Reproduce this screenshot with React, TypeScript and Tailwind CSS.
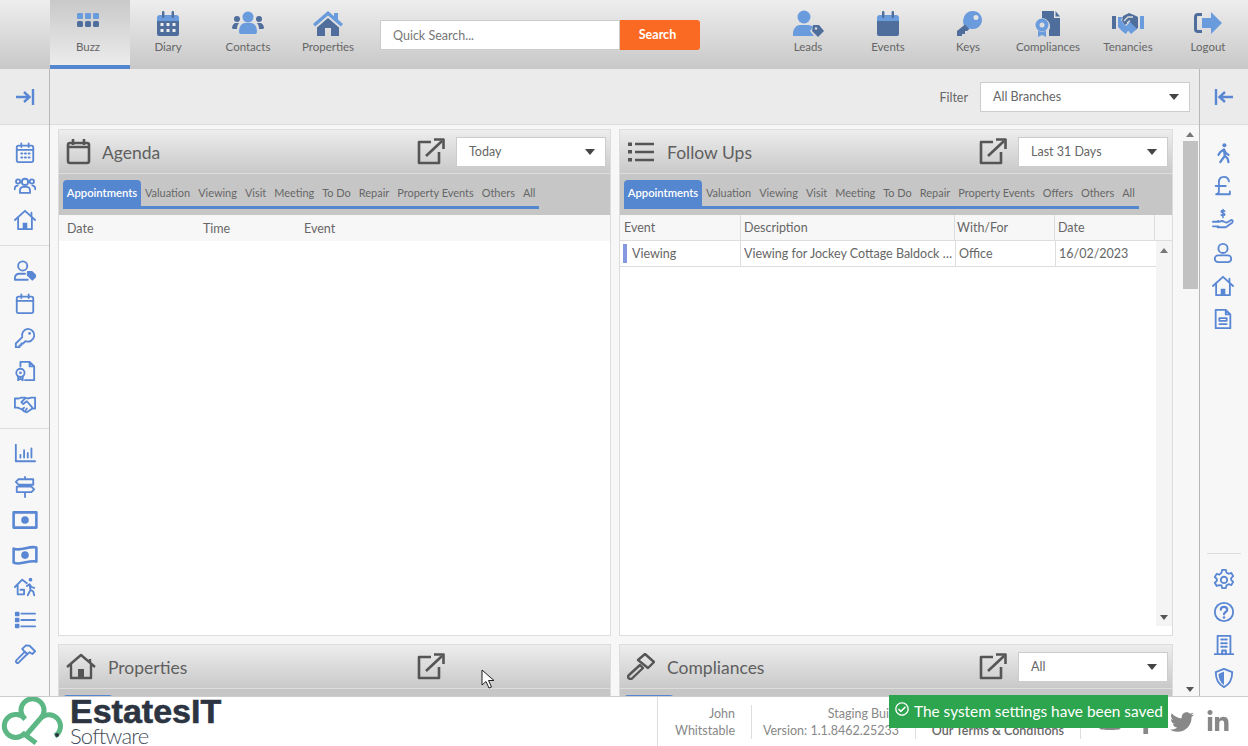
import { useState, type ReactNode } from "react";
import { FaFacebookF, FaLinkedinIn, FaRegCheckCircle, FaTwitter, FaYoutube } from "react-icons/fa";

const DARK = "#4f6e9b";
const LIGHT = "#6a9bdc";

// two tone icons for the top bar
const topIcons: Record<string, ReactNode> = {
  buzz: (
    <>
      <g fill={LIGHT}>
        <rect x="5" y="3" width="6" height="6" rx="1" />
        <rect x="13" y="3" width="6" height="6" rx="1" />
        <rect x="21" y="3" width="6" height="6" rx="1" />
      </g>
      <g fill={DARK}>
        <rect x="5" y="11" width="6" height="6" rx="1.5" />
        <rect x="13" y="11" width="6" height="6" rx="1.5" />
        <rect x="21" y="11" width="6" height="6" rx="1.5" />
      </g>
    </>
  ),
  diary: (
    <>
      <path d="M5 8a3 3 0 0 1 3-3h16a3 3 0 0 1 3 3v3H5z" fill={LIGHT} />
      <path d="M5 11h22v13a2 2 0 0 1-2 2H7a2 2 0 0 1-2-2z" fill={DARK} />
      <rect x="10" y="1" width="2.4" height="7" rx="1" fill={DARK} />
      <rect x="19.6" y="1" width="2.4" height="7" rx="1" fill={DARK} />
      <g fill="#eee">
        <rect x="8.5" y="13" width="3" height="3" />
        <rect x="14.5" y="13" width="3" height="3" />
        <rect x="20.5" y="13" width="3" height="3" />
        <rect x="8.5" y="19" width="3" height="3" />
        <rect x="14.5" y="19" width="3" height="3" />
        <rect x="20.5" y="19" width="3" height="3" />
      </g>
    </>
  ),
  contacts: (
    <>
      <circle cx="5" cy="9" r="3" fill={DARK} />
      <circle cx="27" cy="9" r="3" fill={DARK} />
      <path d="M0 18c0-3 2-5 4-5h3c-2 2-2 5-2 6H2a2 2 0 0 1-2-1zM32 18c0-3-2-5-4-5h-3c2 2 2 5 2 6h3a2 2 0 0 0 2-1z" fill={DARK} />
      <circle cx="16" cy="7" r="5.5" fill={LIGHT} />
      <path d="M7 22c0-6 3-9 6-9h6c3 0 6 3 6 9a2 2 0 0 1-2 2H9a2 2 0 0 1-2-2z" fill={LIGHT} />
    </>
  ),
  properties: (
    <>
      <path d="M16 1 1 14l2.200 2.500L16 5.500l12.800 11L31 14l-5-4.400V3h-4v3.200z" fill={LIGHT} />
      <path d="M16 8 5 17.500V26h8v-8h6v8h8v-8.500z" fill={DARK} />
    </>
  ),
  leads: (
    <>
      <circle cx="12" cy="7" r="6.500" fill={LIGHT} />
      <path d="M1 26c-.5-7 3-11 7-11h8c2 0 4 1 5 2l-3 4 4 5z" fill={LIGHT} />
      <path d="M21 15h6l5 6-6 6-6-6z" fill={DARK} />
      <circle cx="24" cy="18.500" r="1.200" fill="#ddd" />
    </>
  ),
  events: (
    <>
      <path d="M5 8a3 3 0 0 1 3-3h16a3 3 0 0 1 3 3v3H5z" fill={LIGHT} />
      <path d="M5 11h22v13a2 2 0 0 1-2 2H7a2 2 0 0 1-2-2z" fill={DARK} />
      <rect x="10" y="1" width="2.400" height="7" rx="1" fill={DARK} />
      <rect x="19.600" y="1" width="2.400" height="7" rx="1" fill={DARK} />
    </>
  ),
  keys: (
    <>
      <path d="M21 1a9 9 0 1 1-3 17.500L15 21l-3-6c-.5-1-1-2-.9-5A9.500 9.500 0 0 1 21 1zm3 4a2.500 2.500 0 1 0 0 5 2.500 2.500 0 0 0 0-5z" fillRule="evenodd" fill={LIGHT} />
      <path d="M13 14.500 17 19l-2 2h-2v3h-3v2H5v-5z" fill={DARK} />
    </>
  ),
  compliances: (
    <>
      <path d="M10 1h12v7h6v18H17v-6a8 8 0 0 0-1-9 8 8 0 0 0-6-3z" fill={DARK} />
      <path d="M23.500 1 28 6.500h-4.500z" fill={DARK} />
      <circle cx="10" cy="15" r="6.500" fill={LIGHT} />
      <circle cx="10" cy="15" r="2.500" fill="#ddd" />
      <path d="M6 20.500V27l4-2 4 2v-6.500a7 7 0 0 1-8 0z" fill={LIGHT} />
    </>
  ),
  tenancies: (
    <>
      <rect x="0" y="6" width="4" height="13" fill={DARK} />
      <rect x="28" y="6" width="4" height="13" fill={LIGHT} />
      <path d="M6 7h5l-2 3 3 4 5 5-3 5-3-2-5-5z" fill={LIGHT} />
      <path d="M11 6l6-3 5 2 4 2v11l-3 2-6-8-4 3-3-4z" fill={DARK} />
      <path d="m13 17 5-5 7 7-6 5z" fill={LIGHT} />
      <path d="m12 11 4-4h5M15 13l3-2.500" fill="none" stroke="#ddd" strokeWidth="1.400" />
    </>
  ),
  logout: (
    <>
      <path d="M10 3H6a4 4 0 0 0-4 4v12a4 4 0 0 0 4 4h4v-3H6a1 1 0 0 1-1-1V7a1 1 0 0 1 1-1h4z" fill={DARK} />
      <path d="M19 2 30 13 19 24v-6h-9V8h9z" fill={LIGHT} />
    </>
  ),
};

const S = "#5a87d3";

// outline icons for the two side bars
const sideIcons: Record<string, ReactNode> = {
  calendar: (
    <>
      <rect x="3" y="4" width="18" height="18" rx="2" />
      <path d="M8 1.500v4M16 1.500v4M3 8.500h18" />
      <path d="M8 12.500h1M12 12.500h1M16 12.500h1M8 17h1M12 17h1M16 17h1" strokeWidth="2.200" />
    </>
  ),
  users: (
    <>
      <circle cx="12" cy="7.500" r="3.400" />
      <circle cx="4.500" cy="7" r="2.300" />
      <circle cx="19.500" cy="7" r="2.300" />
      <path d="M6.500 19.500v-2c0-3 2-4.500 4-4.500h3c2 0 4 1.500 4 4.500v2zM.8 15.500c0-3 1.200-4 3.200-4M23.200 15.500c0-3-1.200-4-3.200-4" />
    </>
  ),
  home: (
    <>
      <path d="M1 12 12 2l11 10M4.500 10v12h15V10" />
      <rect x="9.500" y="15" width="5" height="7" fill={S} stroke="none" />
      <path d="M19 4v4" />
    </>
  ),
  lead: (
    <>
      <circle cx="9.500" cy="6.500" r="5" />
      <path d="M1 21.500V20c0-3 2-5 5-5h6M1 21.500h14" />
      <path d="M15 13h4.500l4.500 4.500-4 4-5-5z" fill={S} />
    </>
  ),
  event: (
    <>
      <rect x="3" y="4" width="18" height="18" rx="2" />
      <path d="M8 1.500v4M16 1.500v4M3 8.500h18" />
    </>
  ),
  key: (
    <>
      <path d="M15 2a7 7 0 1 1-2.500 13.500L10 18H8v2H6v2H2v-4l7-7A7 7 0 0 1 15 2z" />
      <circle cx="17" cy="7" r="1.500" fill={S} stroke="none" />
    </>
  ),
  compliance: (
    <>
      <path d="M7 7V2h10l5 5v15H12M17 2v5h5" />
      <circle cx="7" cy="14" r="4.500" />
      <circle cx="7" cy="14" r="1.500" fill={S} stroke="none" />
      <path d="M4.500 18v4l2.500-1.500L9.500 22v-4" />
    </>
  ),
  handshake: (
    <>
      <path d="M1 6h4l3-1h4l3 1 4-1h4v12h-3l-6 4-3-1-2-2-5-2H1z" />
      <path d="M12 6 8 10l2 2 4-3 6 7M12 20l2-3M9 18l2-2" />
    </>
  ),
  chart: <path d="M2 3v18h21M7 17v-3M11 17V9M15 17v-5M19 17V7" />,
  signpost: <path d="M12 1v2.500M5 3.500h16v6H5L2 6.500zM12 9.500v2M3 11.500h16l3 3-3 3H3zM12 17.500V23" />,
  cash: (
    <>
      <rect x="1.500" y="5" width="21" height="14" strokeWidth="2.400" />
      <circle cx="12" cy="12" r="3.500" fill={S} stroke="none" />
    </>
  ),
  wave: (
    <>
      <path d="M1.500 7c7 3 14-3 21-1v13c-7-2-14 4-21 1z" strokeWidth="2.400" />
      <circle cx="12" cy="13" r="3.500" fill={S} stroke="none" />
    </>
  ),
  moving: (
    <>
      <path d="M1 12 9 4l5 4M4 10v10h6M7 15h4v5" />
      <circle cx="18" cy="4" r="2" fill={S} stroke="none" />
      <path d="m14 11 3-2 2 3 3 1M17 10l1 5-3 6M18 15l3 2 1 4" strokeWidth="2" />
    </>
  ),
  list: (
    <>
      <path d="M8 5h15M8 12h15M8 19h15" />
      <path d="M2 4h3v3H2zM2 10.500h3v3H2zM2 17h3v3H2z" fill={S} />
    </>
  ),
  hammer: <path d="M2.500 19 12 9.500 14.500 12 5 21.500a1.800 1.800 0 0 1-2.500-2.500zM9 6.500 13 2.500l4 .5 6 6-3 3-3-2-2.500 2.500-3-3z" />,
  walker: (
    <>
      <circle cx="13.500" cy="3.500" r="2.200" fill={S} stroke="none" />
      <path d="m9 11 4-3 2 4 3 2M13 9l1 6-5 7M14 15l3 3 1 4M9 11l-2 3" strokeWidth="2.400" />
    </>
  ),
  pound: <path d="M18.500 7c-.5-3-2.500-5-5.500-5S7.500 4 7.500 8v10c0 1.500-1 3-3 3h15v-3M4 12h11" strokeWidth="2" />,
  hand: (
    <>
      <path d="M1 15h7c2-1 4-1 5 0l3 1 5-3c2 0 2 2 1 3l-7 5H6M1 20h6M5 15l2-1" />
      <path d="M14 3.500c-1-1-4-1-4 .5s4 1.500 4 3-3 1.500-4 .5M12 1.500v9" strokeWidth="1.600" />
    </>
  ),
  person: (
    <>
      <circle cx="12" cy="7" r="5" />
      <rect x="3" y="14.500" width="18" height="7.500" rx="3.700" />
    </>
  ),
  doc: (
    <>
      <path d="M4 2h11l5 5v15H4zM15 2v5h5" />
      <path d="M8 11h8v3H8zM8 17.500h8" />
    </>
  ),
  gear: (
    <>
      <path d="m10 2 4 0 .7 3 2.300 1.300 3-.9 2 3.500-2.200 2.100v2l2.200 2.100-2 3.500-3-.9-2.300 1.300-.7 3h-4l-.7-3L7 18.700l-3 .9-2-3.500L4.200 14v-2L2 9.900l2-3.500 3 .9L9.300 5z" />
      <circle cx="12" cy="13" r="3.500" />
    </>
  ),
  help: (
    <>
      <circle cx="12" cy="12" r="10" />
      <path d="M8.500 9.500c0-2 1.500-3 3.500-3s3.500 1 3.500 3c0 2.500-3.500 2.500-3.500 5" strokeWidth="2.400" />
      <circle cx="12" cy="18" r="1.400" fill={S} stroke="none" />
    </>
  ),
  building: (
    <>
      <path d="M5 22V2h14v20M2 22h20" />
      <path d="M9 6h2M13 6h2M9 10h2M13 10h2M9 14h2M13 14h2M10 22v-4h4v4" strokeWidth="2.200" />
    </>
  ),
  shield: (
    <>
      <path d="M12 2 3 5.500C3 14 6 19 12 22c6-3 9-8 9-16.500z" />
      <path d="M12 5 6 7.500c0 5 2 9.500 6 12z" fill={S} stroke="none" />
    </>
  ),
};

const SideIcon = ({ name, wide }: { name: string; wide?: boolean }) => (
  <svg
    width={wide ? 26 : 22}
    height={wide ? 26 : 22}
    viewBox="0 0 24 24"
    fill="none"
    stroke={S}
    strokeWidth="2"
    strokeLinejoin="round"
    strokeLinecap="round"
    className={wide ? "-my-[2px]" : ""}
  >
    {sideIcons[name]}
  </svg>
);

const NavItem = ({ icon, label, active, shift }: { icon: string; label: string; active?: boolean; shift?: boolean }) => (
  <div
    className={`flex w-20 flex-col items-center pt-[10px] ${shift ? "pr-[4px]" : ""} ${
      active ? "h-[69px] border-b-4 border-[#5586d0] bg-gradient-to-b from-[#c9c9c9] to-[#ececec]" : ""
    }`}
  >
    <svg width="32" height="27" viewBox="0 0 32 27">
      {topIcons[icon]}
    </svg>
    <span className="mt-[3px] text-[11.5px] leading-[14px] text-[#666]">{label}</span>
  </div>
);

const Caret = () => <span className="h-0 w-0 border-x-[5px] border-t-[6px] border-x-transparent border-t-[#444]" />;

const Select = ({ value, className }: { value: string; className: string }) => (
  <div className={`flex h-[30px] items-center justify-between border border-[#ccc] bg-white pl-3 pr-[10px] text-[12.5px] text-[#666] ${className}`}>
    <span className="mt-[2px]">{value}</span>
    <Caret />
  </div>
);

const Popout = () => (
  <svg width="28" height="27" viewBox="0 0 28 27" fill="none" stroke="#555" strokeWidth="2.600" strokeLinejoin="round">
    <path d="M14 4H2v21h20V14" />
    <path d="M9 18 25 3" />
    <path d="M17 1.500h9.500V11" />
  </svg>
);

const PanelIcons: Record<string, { width: string; svg: ReactNode }> = {
  agenda: {
    width: "w-[36px]",
    svg: (
      <svg width="26" height="27" viewBox="0 0 26 27" fill="none" stroke="#555" strokeWidth="2.600">
        <rect x="2" y="5" width="21" height="20" rx="2" />
        <path d="M7 1v6M18 1v6M2 9h21" />
      </svg>
    ),
  },
  followups: {
    width: "w-[40px]",
    svg: (
      <svg width="28" height="22" viewBox="0 0 28 22" fill="none" stroke="#555" strokeWidth="2.600">
        <path d="M8 3h19M8 11h19M8 19h19" />
        <path d="M1 1.500h4v3.500H1zM1 9h4v3.500H1zM1 17h4v3.500H1z" fill="#555" stroke="none" />
      </svg>
    ),
  },
  properties: {
    width: "w-[42px]",
    svg: (
      <svg width="30" height="27" viewBox="0 0 30 27" fill="none" stroke="#555" strokeWidth="2.400" strokeLinejoin="round">
        <path d="M1 14 15 2l14 12M5 11v14h20V11M24 6v4" />
        <rect x="12" y="16" width="6" height="9" fill="#555" stroke="none" />
      </svg>
    ),
  },
  compliances: {
    width: "w-[40px]",
    svg: (
      <svg width="28" height="27" viewBox="0 0 28 27" fill="none" stroke="#555" strokeWidth="2.400" strokeLinejoin="round">
        <path d="M2 22 13 12l3 3L5 25.500a2 2 0 0 1-3-3.500z" />
        <path d="M11 7 18 1l9 8-6 6z" />
      </svg>
    ),
  },
};

const agendaTabs = ["Valuation", "Viewing", "Visit", "Meeting", "To Do", "Repair", "Property Events", "Others", "All"];
const followTabs = ["Valuation", "Viewing", "Visit", "Meeting", "To Do", "Repair", "Property Events", "Offers", "Others", "All"];

const Tabs = ({ tabs }: { tabs: string[] }) => (
  <div className="h-[41px] bg-[#c6c6c6] pl-[4px] pt-[6px]">
    <div className="flex w-fit items-stretch whitespace-nowrap border-b-[3px] border-[#5586d0] text-[10.95px]">
      <div className="flex h-[26px] w-[78px] items-center justify-center rounded-t-[4px] bg-[#5586d0] text-[11.25px] font-semibold text-white">Appointments</div>
      {tabs.map((t) => (
        <div key={t} className="flex items-center px-[4px] text-[#666]">
          {t}
        </div>
      ))}
    </div>
  </div>
);

// the lower panels are cut off by the footer, only the top of their first tab shows
const TabStub = () => (
  <div className="h-[41px] bg-[#c6c6c6] pl-[4px] pt-[6px]">
    <div className="h-[26px] w-[50px] rounded-t-[4px] bg-[#5586d0]" />
  </div>
);

const PanelHead = ({ icon, title, select }: { icon: string; title: string; select?: string }) => (
  <div className="flex h-[44px] items-center border-b border-[#ddd] bg-gradient-to-b from-[#ededed] to-[#c9c9c9] pl-[7px] pr-[4px]">
    <div className={`flex shrink-0 justify-start ${PanelIcons[icon].width}`}>{PanelIcons[icon].svg}</div>
    <span className="mt-[3px] text-[17.5px] text-[#5f5f5f]">{title}</span>
    <div className="ml-auto flex items-center gap-[11px]">
      <Popout />
      {select ? <Select value={select} className="w-[150px]" /> : <div className="h-[30px] w-[150px]" />}
    </div>
  </div>
);

const Arrow = ({ up, className }: { up?: boolean; className?: string }) => (
  <span className={`h-0 w-0 border-x-[4px] border-x-transparent ${up ? "border-b-[5px] border-b-[#777]" : "border-t-[5px] border-t-[#555]"} ${className ?? ""}`} />
);

const leftGroups = [
  { pad: "pt-[17px] pb-[14px]", icons: ["calendar", "users", "home"] },
  { pad: "pt-[14px] pb-[13px]", icons: ["lead", "event", "key", "compliance", "handshake"] },
  { pad: "pt-[13px]", icons: ["chart", "signpost", "cash", "wave", "moving", "list", "hammer"] },
];

const Logo = () => (
  <div className="flex h-[49px] w-[240px] shrink-0 overflow-hidden">
    <svg width="68" height="49" viewBox="0 0 68 49" fill="none" stroke="#5cb784" strokeWidth="5" className="shrink-0">
      <path d="M55 39A11.500 11.500 0 1 0 40 22A11.500 11.500 0 1 0 25 22A11.500 11.500 0 1 0 24 37L36 46" />
      <path d="M40 22 27 37" />
      <circle cx="57" cy="38" r="2" fill="#2c3442" stroke="none" />
    </svg>
    <div className="ml-[2px] flex flex-col">
      <span
        className="mt-[1px] h-[27px] text-[34px] font-bold leading-[26px] text-[#2c3442] [-webkit-text-stroke:0.6px_#2c3442]"
        style={{ fontFamily: '"Liberation Sans", sans-serif' }}
      >
        EstatesIT
      </span>
      <span className="mt-[2px] text-[22px] font-light leading-[18px] tracking-[-0.8px] text-[#444c58]">Software</span>
    </div>
  </div>
);

export default function App() {
  const [search, setSearch] = useState("");

  return (
    <div className="relative flex h-[746px] w-[1248px] flex-col overflow-hidden bg-white" style={{ fontFamily: 'Lato, "Noto Sans", sans-serif' }}>
      <header className="flex h-[69px] shrink-0 bg-gradient-to-b from-[#eeeeee] to-[#c8c8c8] pl-[50px]">
        <NavItem icon="buzz" label="Buzz" active shift />
        <NavItem icon="diary" label="Diary" shift />
        <NavItem icon="contacts" label="Contacts" shift />
        <NavItem icon="properties" label="Properties" shift />
        <div className="ml-[10px] mt-[20px] flex h-[30px] w-[320px]">
          <input
            value={search}
            onChange={(e) => setSearch(e.target.value)}
            placeholder="Quick Search..."
            className="h-full w-[240px] border border-[#ccc] bg-white px-3 text-[12.5px] text-[#666] outline-none placeholder:text-[#777]"
          />
          <button className="flex-1 rounded-r-[3px] bg-[#fb6a22] pr-[5px] text-[12.5px] font-bold text-white">Search</button>
        </div>
        <div className="ml-auto flex">
          <NavItem icon="leads" label="Leads" />
          <NavItem icon="events" label="Events" />
          <NavItem icon="keys" label="Keys" />
          <NavItem icon="compliances" label="Compliances" />
          <NavItem icon="tenancies" label="Tenancies" />
          <NavItem icon="logout" label="Logout" />
        </div>
      </header>

      <div className="flex min-h-0 flex-1">
        <aside className="flex w-[50px] shrink-0 flex-col border-r border-[#b8b8b8] bg-[#f7f7f7]">
          <div className="flex h-[56px] shrink-0 items-center justify-center border-b border-[#ddd] bg-[#ebebeb]">
            <svg width="20" height="16" viewBox="0 0 20 16" fill="none" stroke={S} strokeWidth="2.400">
              <path d="M1 8h13M9 3l5.500 5L9 13" />
              <path d="M18 0v16" />
            </svg>
          </div>
          {leftGroups.map((g, i) => (
            <div key={i} className={`flex flex-col items-center gap-[11.4px] ${g.pad} ${i < 2 ? "border-b border-[#ddd]" : ""}`}>
              {g.icons.map((n) => (
                <SideIcon key={n} name={n} wide={n === "cash" || n === "wave"} />
              ))}
            </div>
          ))}
        </aside>

        <main className="flex min-w-0 flex-1 flex-col bg-[#f7f7f7]">
          <div className="flex h-[56px] shrink-0 items-center justify-end gap-3 border-b border-[#ddd] bg-[#ebebeb] pr-[9px]">
            <span className="mt-[3px] text-[12.5px] text-[#666]">Filter</span>
            <Select value="All Branches" className="w-[210px]" />
          </div>
          <div className="relative flex min-h-0 flex-1 overflow-hidden">
            <div className="grid h-fit w-[1123px] shrink-0 grid-cols-[553px_554px] gap-[8px] pl-[8px] pt-[4px]">
              <section className="h-[507px] border border-[#ddd] bg-white">
                <PanelHead icon="agenda" title="Agenda" select="Today" />
                <Tabs tabs={agendaTabs} />
                <div className="flex h-[26px] items-center bg-[#f7f7f7] pt-[2px] text-[12.5px] text-[#666]">
                  <span className="w-[144px] pl-2">Date</span>
                  <span className="w-[101px]">Time</span>
                  <span>Event</span>
                </div>
              </section>
              <section className="h-[507px] border border-[#ddd] bg-white">
                <PanelHead icon="followups" title="Follow Ups" select="Last 31 Days" />
                <Tabs tabs={followTabs} />
                <div className="flex h-[26px] border-b border-[#ddd] bg-[#f7f7f7] text-[12.5px] text-[#666]">
                  <span className="flex w-[121px] items-center border-r border-[#ddd] pl-1 pt-[2px]">Event</span>
                  <span className="flex w-[214px] items-center border-r border-[#ddd] pl-[3px] pt-[2px]">Description</span>
                  <span className="flex w-[100px] items-center border-r border-[#ddd] pl-[2px] pt-[2px]">With/For</span>
                  <span className="flex w-[100px] items-center border-r border-[#ddd] pl-[3px] pt-[2px]">Date</span>
                </div>
                <div className="flex h-[385px]">
                  <div className="h-[26px] w-[536px] border-b border-[#ddd]">
                    <div className="flex h-full items-center text-[12.5px] text-[#666]">
                      <span className="flex h-full w-[121px] items-center gap-[5px] border-r border-[#ddd] pl-[3px]">
                        <i className="h-[19px] w-[4px] bg-[#8598e0]" />
                        <span className="mt-[2px]">Viewing</span>
                      </span>
                      <span className="flex h-full w-[215px] items-center border-r border-[#ddd] pl-[3px] pt-[2px]">
                        <span className="truncate">Viewing for Jockey Cottage Baldock Street, Royston</span>
                      </span>
                      <span className="flex h-full w-[100px] items-center border-r border-[#ddd] pl-[3px] pt-[2px]">Office</span>
                      <span className="pl-[3px] pt-[2px]">16/02/2023</span>
                    </div>
                  </div>
                  <div className="flex w-[16px] flex-col items-center justify-between bg-[#f4f4f4] pb-[6px] pt-[7px]">
                    <Arrow up />
                    <Arrow />
                  </div>
                </div>
              </section>
              <section className="h-[120px] border border-[#ddd] bg-white">
                <PanelHead icon="properties" title="Properties" />
                <TabStub />
              </section>
              <section className="h-[120px] border border-[#ddd] bg-white">
                <PanelHead icon="compliances" title="Compliances" select="All" />
                <TabStub />
              </section>
            </div>
            <div className="flex w-[26px] shrink-0 flex-col items-center pb-[4px] pl-[8px] pt-[7px]">
              <Arrow up />
              <div className="mt-[4px] h-[148px] w-[15px] bg-[#c1c1c1]" />
              <Arrow className="mt-auto" />
            </div>
          </div>
        </main>

        <aside className="flex w-[49px] shrink-0 flex-col border-l border-[#b8b8b8] bg-[#f7f7f7]">
          <div className="flex h-[56px] shrink-0 items-center justify-center border-b border-[#ddd] bg-[#ebebeb]">
            <svg width="20" height="16" viewBox="0 0 20 16" fill="none" stroke={S} strokeWidth="2.400">
              <path d="M19 8H6M11 3 5.500 8l5.500 5" />
              <path d="M2 0v16" />
            </svg>
          </div>
          <div className="flex flex-col items-center gap-[11.2px] pr-[3px] pt-[17px]">
            {["walker", "pound", "hand", "person", "home", "doc"].map((n) => (
              <SideIcon key={n} name={n} />
            ))}
          </div>
          <div className="mx-[7px] mt-auto flex flex-col items-center gap-[11px] border-t border-[#ddd] pb-[7px] pr-[1px] pt-[14px]">
            {["gear", "help", "building", "shield"].map((n) => (
              <SideIcon key={n} name={n} />
            ))}
          </div>
        </aside>
      </div>

      <footer className="flex h-[50px] shrink-0 items-stretch border-t border-[#ccc] bg-white text-[12.5px] text-[#888]">
        <Logo />
        <div className="ml-auto flex w-[591px] items-center border-l border-[#ddd]">
          <div className="w-[94px] border-r border-[#ddd] pr-4 text-right leading-[17px]">
            <div>John</div>
            <div>Whitstable</div>
          </div>
          <div className="w-[164px] border-r border-[#ddd] pr-4 text-right leading-[17px]">
            <div>Staging Build</div>
            <div>Version: 1.1.8462.25233</div>
          </div>
          <div className="w-[165px] border-r border-[#ddd] pr-4 text-right leading-[17px]">
            <div>&nbsp;</div>
            <div className="font-semibold text-[#666]">Our Terms &amp; Conditions</div>
          </div>
          <div className="flex items-center gap-[12px] pl-[17px] text-[24px] text-[#888]">
            <FaYoutube />
            <FaFacebookF />
            <FaTwitter />
            <FaLinkedinIn />
          </div>
        </div>
      </footer>

      {/* toast and mouse pointer sit on top of everything */}
      <div className="absolute left-[889px] top-[695px] flex h-[33px] w-[279px] items-center gap-[5px] bg-[#2da44e] pl-[6px] text-[15.4px] text-white">
        <FaRegCheckCircle className="mb-[5px] shrink-0 text-[14px]" />
        <span>The system settings have been saved</span>
      </div>
      <svg className="absolute left-[481px] top-[669px]" width="15" height="21" viewBox="0 0 15 21">
        <path d="M1 1v15l4-3.500 3 6.500 2.500-1-3-6.500H13z" fill="#fff" stroke="#222" strokeWidth="1" />
      </svg>
    </div>
  );
}
